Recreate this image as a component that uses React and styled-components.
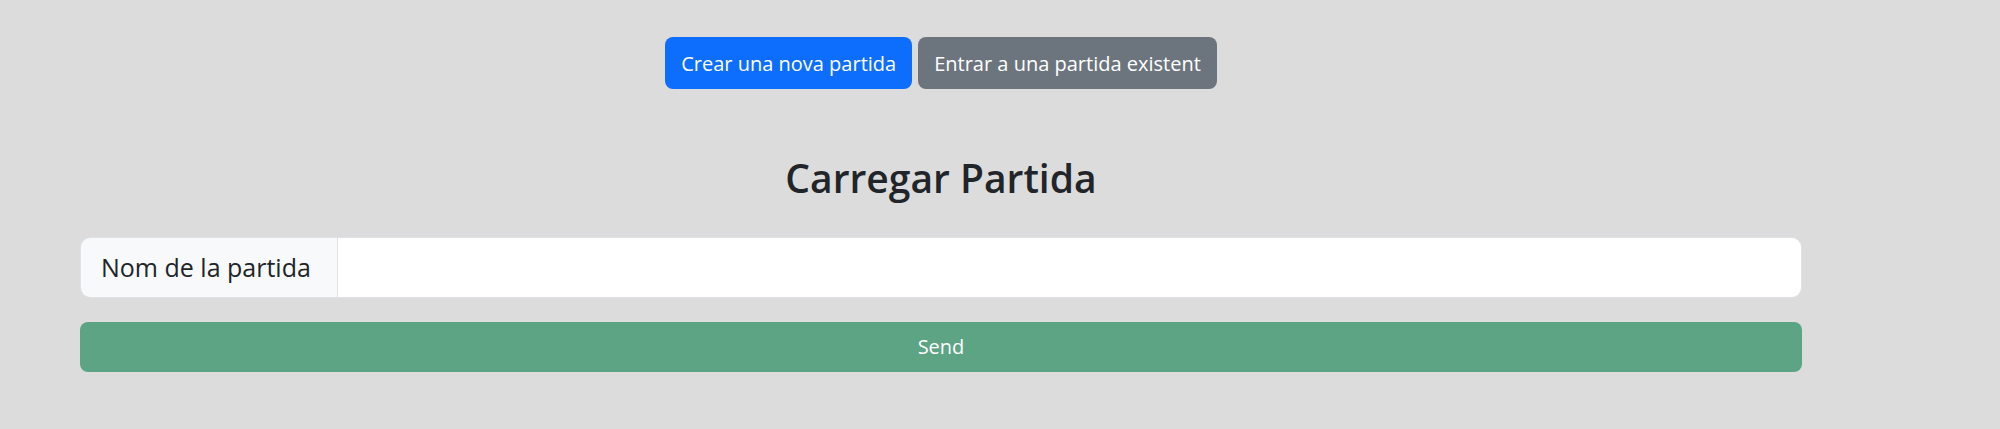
import React from "react";
import styled, { createGlobalStyle } from "styled-components";

const GlobalStyle = createGlobalStyle`
  html, body {
    margin: 0;
    padding: 0;
    background-color: #dcdcdc;
    font-family: "Open Sans", "Noto Sans", sans-serif;
    color: #212529;
  }
`;

export default function App() {
  return (
    <>
      <GlobalStyle />
      <Page>
        <ModeBar>
          <ModeButton $variant="primary">Crear una nova partida</ModeButton>
          <ModeButton $variant="secondary">Entrar a una partida existent</ModeButton>
        </ModeBar>
        <Form onSubmit={(e) => e.preventDefault()}>
          <Title>Carregar Partida</Title>
          <InputGroup>
            <InputLabel>Nom de la partida</InputLabel>
            <TextInput type="text" />
          </InputGroup>
          <SendButton type="submit">Send</SendButton>
        </Form>
      </Page>
    </>
  );
}

const Page = styled.div`
  width: 1722px;
  padding: 37px 0 0 80px;
`;

const ModeBar = styled.div`
  display: flex;
  justify-content: center;
  gap: 6px;
`;

const ModeButton = styled.button`
  height: 52px;
  padding: 0 16px;
  border: none;
  border-radius: 8px;
  font-family: inherit;
  font-size: 20px;
  color: #fff;
  background-color: ${(p) => (p.$variant === "primary" ? "#0d6efd" : "#6c757d")};
  cursor: pointer;
`;

const Form = styled.form`
  display: flex;
  flex-direction: column;
  margin-top: 66px;
`;

const Title = styled.h2`
  margin: 0 0 35px;
  text-align: center;
  font-size: 39px;
  font-weight: 600;
  line-height: 1.2;
`;

const InputGroup = styled.div`
  display: flex;
  height: 61px;
  border: 1px solid #dee2e6;
  border-radius: 10px;
  overflow: hidden;
  box-sizing: border-box;
`;

const InputLabel = styled.span`
  display: flex;
  align-items: center;
  width: 257px;
  box-sizing: border-box;
  padding: 0 20px;
  background-color: #f8f9fa;
  border-right: 1px solid #dee2e6;
  font-size: 25px;
  color: #212529;
  white-space: nowrap;
`;

const TextInput = styled.input`
  flex: 1;
  border: none;
  outline: none;
  background: #fff;
  padding: 0 20px;
  font-family: inherit;
  font-size: 25px;
`;

const SendButton = styled.button`
  margin-top: 24px;
  height: 50px;
  border: none;
  border-radius: 8px;
  background-color: #5ca484;
  color: #fff;
  font-family: inherit;
  font-size: 20px;
  cursor: pointer;
`;
